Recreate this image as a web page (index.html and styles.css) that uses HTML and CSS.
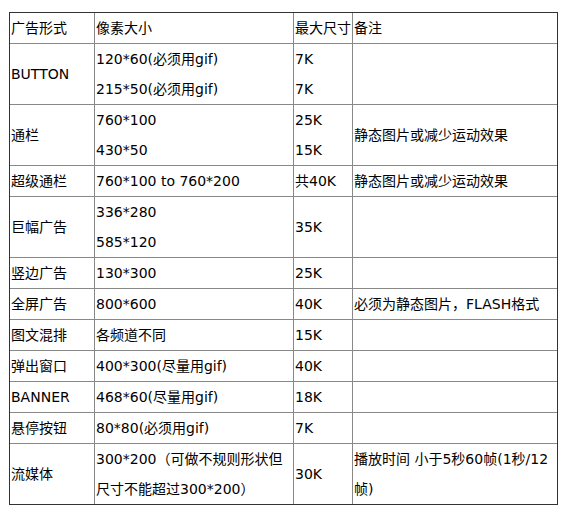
FILE: index.html
```html
<!DOCTYPE html>
<html lang="zh-CN">
<head>
<meta charset="utf-8">
<title>广告形式</title>
<link rel="stylesheet" href="styles.css">
</head>
<body>
<table class="ad-table">
  <colgroup>
    <col class="c1"><col class="c2"><col class="c3"><col class="c4">
  </colgroup>
  <tr><td>广告形式</td><td>像素大小</td><td>最大尺寸</td><td>备注</td></tr>
  <tr>
    <td>BUTTON</td>
    <td><div class="ln">120*60(必须用gif)</div><div class="ln">215*50(必须用gif)</div></td>
    <td><div class="ln">7K</div><div class="ln">7K</div></td>
    <td></td>
  </tr>
  <tr>
    <td>通栏</td>
    <td><div class="ln">760*100</div><div class="ln">430*50</div></td>
    <td><div class="ln">25K</div><div class="ln">15K</div></td>
    <td>静态图片或减少运动效果</td>
  </tr>
  <tr><td>超级通栏</td><td>760*100 to 760*200</td><td>共40K</td><td>静态图片或减少运动效果</td></tr>
  <tr>
    <td>巨幅广告</td>
    <td><div class="ln">336*280</div><div class="ln">585*120</div></td>
    <td>35K</td>
    <td></td>
  </tr>
  <tr><td>竖边广告</td><td>130*300</td><td>25K</td><td></td></tr>
  <tr><td>全屏广告</td><td>800*600</td><td>40K</td><td>必须为静态图片，FLASH格式</td></tr>
  <tr><td>图文混排</td><td>各频道不同</td><td>15K</td><td></td></tr>
  <tr><td>弹出窗口</td><td>400*300(尽量用gif)</td><td>40K</td><td></td></tr>
  <tr><td>BANNER</td><td>468*60(尽量用gif)</td><td>18K</td><td></td></tr>
  <tr><td>悬停按钮</td><td>80*80(必须用gif)</td><td>7K</td><td></td></tr>
  <tr>
    <td>流媒体</td>
    <td><div class="ln">300*200（可做不规则形状但</div><div class="ln">尺寸不能超过300*200）</div></td>
    <td>30K</td>
    <td><div class="ln">播放时间 小于5秒60帧(1秒/12</div><div class="ln">帧)</div></td>
  </tr>
</table>
</body>
</html>
```
FILE: styles.css
```css
html, body {
  margin: 0;
  padding: 0;
  background: #fff;
}
body {
  padding: 12px 0 0 9px;
  font-family: "DejaVu Sans", "Noto Sans CJK SC", sans-serif;
  font-size: 14px;
  color: #000;
}
.ad-table {
  border-collapse: separate;
  border-spacing: 0;
  border: 1px solid #333;
  table-layout: fixed;
  width: 549px;
}
.c1 { width: 85px; }
.c2 { width: 199px; }
.c3 { width: 59px; }
.c4 { width: 204px; }
.ad-table td {
  padding: 0 0 0 1px;
  line-height: 30px;
  height: 30px;
  vertical-align: middle;
  border-right: 1px solid #888;
  border-bottom: 1px solid #888;
  white-space: nowrap;
  overflow: hidden;
}
.ad-table td:last-child {
  border-right: none;
}
.ad-table tr:last-child td {
  border-bottom: none;
}
.ln {
  height: 30px;
  line-height: 30px;
}
```
